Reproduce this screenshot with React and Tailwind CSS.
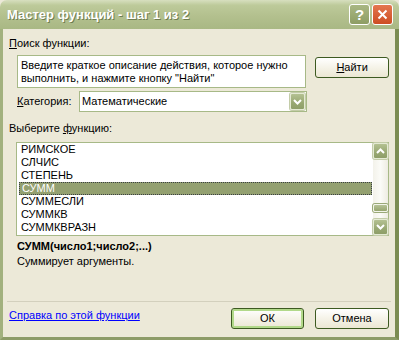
import React from 'react';

const font = { fontFamily: '"Liberation Sans", Arial, sans-serif' };

function Chevron({ up }) {
  return (
    <svg width="9" height="6" viewBox="0 0 9 6" className="block">
      <polyline
        points={up ? '1,5 4.5,1.5 8,5' : '1,1 4.5,4.5 8,1'}
        fill="none"
        stroke="#ffffff"
        strokeWidth="2"
      />
    </svg>
  );
}

function OliveBtn({ up, className = '' }) {
  return (
    <div
      className={`flex items-center justify-center rounded-[2px] border border-[#e4ead4] bg-[linear-gradient(to_bottom,#b4c192,#98a872_60%,#8e9e68)] shadow-[0_0_0_1px_#c3cca8] ${className}`}
    >
      <Chevron up={up} />
    </div>
  );
}

function XpButton({ children, isDefault, className = '' }) {
  return (
    <button
      className={`flex h-[21px] items-center justify-center rounded-[3px] border border-[#3d5a21] bg-[linear-gradient(to_bottom,#ffffff,#f6f4ea_45%,#ebe7d3)] text-[11px] text-black ${
        isDefault ? 'shadow-[inset_0_0_0_2px_#b2d98a]' : ''
      } ${className}`}
    >
      {children}
    </button>
  );
}

const functions = ['РИМСКОЕ', 'СЛЧИС', 'СТЕПЕНЬ', 'СУММ', 'СУММЕСЛИ', 'СУММКВ', 'СУММКВРАЗН'];

export default function App() {
  return (
    <div className="flex h-[340px] w-[399px] flex-col bg-[#ece9d8] text-[11px] leading-[13px] text-black" style={font}>
      {/* title bar */}
      <div className="flex h-[29px] items-center rounded-t-[7px] bg-[linear-gradient(to_bottom,#d7dfbf_0%,#bdca9a_18%,#b3c08e_55%,#a9b884_100%)] pl-[7px] pr-[6px]">
        <span className="flex-1 text-[13px] font-bold text-white [text-shadow:1px_1px_0_#6f7d50]">
          Мастер функций - шаг 1 из 2
        </span>
        <div className="flex items-center gap-[2px]">
          <div className="flex h-[21px] w-[21px] items-center justify-center rounded-[3px] border border-white bg-[linear-gradient(to_bottom,#a9b783,#8e9d64)] text-[15px] font-bold text-white">
            ?
          </div>
          <div className="flex h-[21px] w-[21px] items-center justify-center rounded-[3px] border border-white bg-[linear-gradient(to_bottom,#e4774f,#cd4d22)]">
            <svg width="11" height="11" viewBox="0 0 11 11">
              <path d="M1.5 1.5 L9.5 9.5 M9.5 1.5 L1.5 9.5" stroke="#ffffff" strokeWidth="2" />
            </svg>
          </div>
        </div>
      </div>

      {/* body */}
      <div className="flex flex-1 flex-col border-b-[3px] border-l-[3px] border-r-[4px] border-b-[#8d9c68] border-l-[#a2b17e] border-r-[#7b8c52] pl-[6px] pr-[6px]">
        <div className="mt-[8px] h-[13px]">
          <span className="underline">П</span>оиск функции:
        </div>

        <div className="mt-[5px] flex items-start">
          <div className="ml-[8px] h-[33px] w-[290px] border border-[#a7b987] bg-white pl-[3px] pt-[3px]">
            Введите краткое описание действия, которое нужно
            <br />
            выполнить, и нажмите кнопку "Найти"
          </div>
          <XpButton className="ml-[9px] mt-[2px] w-[74px]">
            <span className="underline">Н</span>айти
          </XpButton>
        </div>

        <div className="mt-[3px] flex items-center">
          <div className="ml-[8px] w-[62px]">
            <span className="underline">К</span>атегория:
          </div>
          <div className="flex h-[21px] w-[228px] items-center justify-between border border-[#a7b987] bg-white pl-[2px] pr-[1px]">
            <span>Математические</span>
            <OliveBtn className="h-[17px] w-[15px]" />
          </div>
        </div>

        <div className="mt-[10px] h-[13px]">
          Выберите <span className="underline">ф</span>ункцию:
        </div>

        <div className="ml-[7px] mt-[7px] flex h-[94px] w-[373px] border border-[#a7b987] bg-white">
          <div className="flex flex-1 flex-col pl-[2px] pr-[1px]">
            {functions.map((f) => (
              <div
                key={f}
                className={`h-[13px] pl-[2px] ${
                  f === 'СУММ' ? 'border border-dotted border-[#3b3f45] bg-[#93a070] pl-[1px] leading-[11px] text-white' : ''
                }`}
              >
                {f}
              </div>
            ))}
          </div>
          <div className="flex w-[15px] flex-col bg-[linear-gradient(to_right,#f3f2ea,#fbfbf7_50%,#eeece2)]">
            <OliveBtn up className="h-[16px] w-[15px]" />
            <div className="flex flex-1 flex-col justify-end pb-[7px]">
              <div className="h-[8px] rounded-[2px] border border-[#f2f4ea] bg-[linear-gradient(to_bottom,#b6c296,#96a56f)] shadow-[0_0_0_1px_#9aa978]" />
            </div>
            <OliveBtn className="h-[16px] w-[15px]" />
          </div>
        </div>

        <div className="ml-[8px] mt-[4px] h-[13px] font-bold">СУММ(число1;число2;...)</div>
        <div className="ml-[8px] mt-[2px] h-[13px]">Суммирует аргументы.</div>

        <div className="-ml-[2px] mt-[33px] h-px w-[384px] bg-[#d3d0bd]" />

        <div className="mt-[6px] flex items-start">
          <a href="#" className="mt-[1px] flex-1 text-[#0000ff] underline">
            Справка по этой функции
          </a>
          <XpButton isDefault className="w-[73px]">
            ОК
          </XpButton>
          <XpButton className="ml-[11px] w-[74px]">Отмена</XpButton>
        </div>
      </div>
    </div>
  );
}
